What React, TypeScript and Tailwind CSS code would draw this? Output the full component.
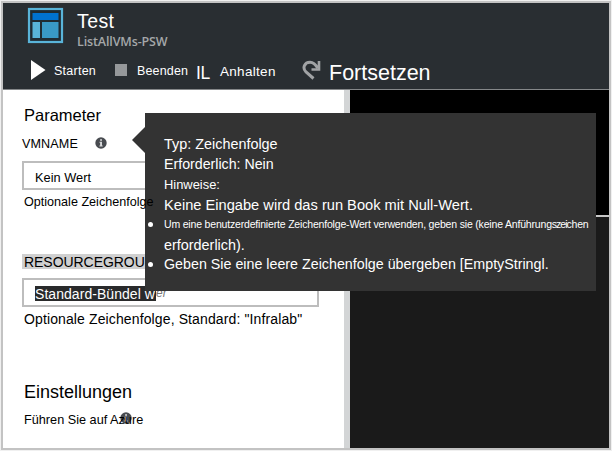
import type { ReactNode } from "react";

function InfoIcon({ className = "" }: { className?: string }) {
  return (
    <svg className={className} width="12" height="12" viewBox="0 0 12 12">
      <circle cx="6" cy="6" r="5.7" fill="#484b50" />
      <path d="M5.1 2.3h1.9v1.5H5.1zM4.5 4.8H7v3.6h.7v1H4.4v-1h.7V5.8h-.6z" fill="#d9dadb" />
    </svg>
  );
}

function Line({ className, children }: { className: string; children: ReactNode }) {
  return <div className={`whitespace-nowrap ${className}`}>{children}</div>;
}

function Header() {
  return (
    <header className="h-[87px] shrink-0 border-b border-[#85888a] bg-[#292e32] text-white">
      <div className="flex h-[50px]">
        <svg className="ml-[24px] mt-[4px] shrink-0" width="37" height="37" viewBox="0 0 37 37">
          <rect x="2" y="2" width="33" height="33" fill="#202b32" stroke="#59b4d9" strokeWidth="2.2" />
          <rect x="5.5" y="6" width="26" height="7" fill="#0072d0" />
          <rect x="5.5" y="15" width="7.5" height="16" fill="#59b4d9" />
          <rect x="15" y="15" width="16.5" height="16" fill="#3999c6" />
        </svg>
        <div className="ml-[13px] pt-[7px]">
          <Line className="h-[23px] text-[19.5px] leading-[23px] tracking-[0.4px]">Test</Line>
          <Line className="h-4 pt-px font-['Open_Sans',sans-serif] text-[12.5px] font-semibold leading-4 tracking-[-0.13px] text-[#a4a7a9]">ListAllVMs-PSW</Line>
        </div>
      </div>
      <nav className="flex h-[36px] items-start pl-[28px]">
        <svg className="mt-[7px] shrink-0" width="15" height="20" viewBox="0 0 15 20">
          <path d="M0 0 14.5 10 0 20z" fill="#fff" />
        </svg>
        <Line className="ml-[8px] mt-[9px] w-[61px] text-[12.5px] leading-[18px] tracking-[0.25px]">Starten</Line>
        <div className="mt-[11px] size-[12px] shrink-0 bg-[#95989a]" />
        <Line className="ml-[10px] mt-[9px] w-[59px] text-[12.5px] leading-[18px] tracking-[0.15px]">Beenden</Line>
        <Line className="mt-[10px] w-[24px] text-[17.5px] leading-[20px] tracking-[-0.3px]">IL</Line>
        <Line className="mt-[10px] w-[83px] text-[13.5px] leading-[18px] tracking-[0.3px]">Anhalten</Line>
        <svg className="-ml-px mt-[6px] shrink-0" width="20" height="22" viewBox="0 0 20 22">
          <path d="M11.5 19.5 4 13C0 9 2.5 3.2 8 3.2c3 0 5.2 1.5 7.8 6" fill="none" stroke="#a1a3a5" strokeWidth="3" />
          <path d="M17 2v8.5H9.5" fill="none" stroke="#a1a3a5" strokeWidth="2.6" />
        </svg>
        <Line className="ml-[7px] mt-[6px] text-[21.5px] leading-[28px]">Fortsetzen</Line>
      </nav>
    </header>
  );
}

function ParameterPane() {
  return (
    <section className="w-[341px] shrink-0 bg-white pl-[19px] pt-[15px] text-black">
      <Line className="h-[22px] pl-[2px] text-[16.5px] leading-[20px]">Parameter</Line>
      <div className="mt-[8px] flex h-[18px] items-center">
        <Line className="w-[73px] text-[12.6px] leading-[18px] tracking-[0.1px]">VMNAME</Line>
        <InfoIcon className="-mt-[3px]" />
      </div>
      <div className="mt-[8px] h-[29px] w-[297px] border-2 border-[#bdbdbd] pl-[11px]">
        <Line className="text-[12.8px] leading-[29px]">Kein Wert</Line>
      </div>
      <Line className="relative z-10 mt-[3px] h-[18px] pl-[2px] text-[12.6px] leading-[18px]">Optionale Zeichenfolge</Line>
      <div className="mt-[43px] h-[15px] w-[140px] bg-[#d0d0d0]">
        <Line className="pl-[2px] text-[14px] leading-[16px] tracking-[-0.05px]">RESOURCEGROUP</Line>
      </div>
      <div className="mt-[9px] flex h-[29px] w-[297px] border-2 border-[#bdbdbd] pl-[11px] pt-[6px]">
        <Line className="h-[15px] w-[121px] bg-[#292a2b] text-[14px] leading-[17px] tracking-[0.05px] text-white">Standard-Bündel w</Line>
        <Line className="text-[12px] italic leading-[15px] text-[#777]">er</Line>
      </div>
      <Line className="mt-[4px] h-[18px] pl-[2px] text-[14px] leading-[16px] tracking-[0.12px]">Optionale Zeichenfolge, Standard: "Infralab"</Line>
      <Line className="mt-[51px] h-[24px] pl-[2px] text-[18px] leading-[24px]">Einstellungen</Line>
      <div className="relative mt-[7px] h-[18px]">
        <InfoIcon className="absolute left-[98px] top-[1px]" />
        <Line className="relative pl-[2px] text-[12.7px] leading-[18px]">Führen Sie auf Azure</Line>
      </div>
    </section>
  );
}

function Bullet() {
  return <span className="mr-[11px] size-[5px] shrink-0 rounded-full bg-white" />;
}

function ParameterTooltip() {
  return (
    <div className="flex text-white">
      <svg className="mt-[14px] shrink-0" width="13" height="26" viewBox="0 0 13 26">
        <path d="M13 0v26L0 13z" fill="#333" />
      </svg>
      <div className="h-[178px] w-[451px] bg-[#333] pl-[19px] pt-[21px]">
        <Line className="h-[20px] text-[14.4px] leading-[20px]">Typ: Zeichenfolge</Line>
        <Line className="h-[20px] text-[14.2px] leading-[20px]">Erforderlich: Nein</Line>
        <Line className="h-[20px] text-[12.9px] leading-[22px]">Hinweise:</Line>
        <Line className="h-[20px] text-[14.65px] leading-[22px]">Keine Eingabe wird das run Book mit Null-Wert.</Line>
        <ul>
          <li className="-ml-[16px] flex h-[20px] items-center">
            <Bullet />
            <Line className="text-[10.5px] leading-[20px] tracking-[-0.18px]">Um eine benutzerdefinierte Zeichenfolge-Wert verwenden, geben sie (keine Anführung<span className="tracking-[-1px]">szei</span>chen</Line>
          </li>
          <li>
            <Line className="h-[20px] text-[14.4px] leading-[22px]">erforderlich).</Line>
          </li>
          <li className="-ml-[16px] flex h-[20px] items-center">
            <Bullet />
            <Line className="text-[14.28px] leading-[18px]">Geben Sie eine leere Zeichenfolge übergeben [EmptyStringl.</Line>
          </li>
        </ul>
      </div>
    </div>
  );
}

export default function App() {
  return (
    <main className="h-[451px] w-[612px] bg-[#f0f0f0] pl-px pt-px font-['Liberation_Sans',Arial,sans-serif]">
      <div className="relative flex h-[449px] w-[610px] flex-col border-2 border-[#c3c3c3]">
        <Header />
        <div className="flex min-h-0 flex-1">
          <ParameterPane />
          <div className="w-[6px] shrink-0 bg-[#d3d5d6]" />
          <section className="flex min-w-0 flex-1 flex-col bg-black">
            <div className="h-[125px] shrink-0" />
            <div className="h-[2px] shrink-0 bg-[#c8c8c8]" />
            <div className="flex-1 bg-[#1a1a1a]" />
          </section>
        </div>
        <div className="absolute left-[129px] top-[110px]">
          <ParameterTooltip />
        </div>
      </div>
    </main>
  );
}
